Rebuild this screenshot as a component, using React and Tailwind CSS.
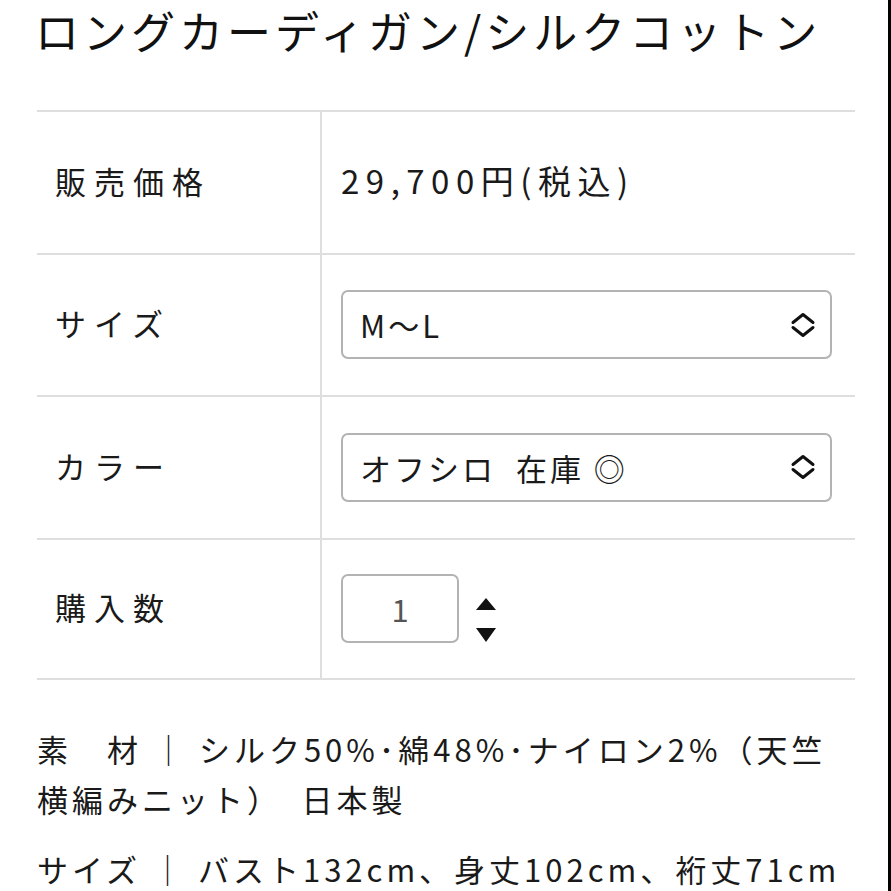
import React from 'react';

const font = { fontFamily: '"Noto Sans CJK JP", "Noto Sans", sans-serif' };

const Chevrons = () => (
  <svg width="26" height="26" viewBox="0 0 26 26" fill="none" stroke="#111" strokeWidth="3" strokeLinecap="round" strokeLinejoin="round">
    <path d="M3 10.5 L13 2.5 L23 10.5" />
    <path d="M3 15.5 L13 23.5 L23 15.5" />
  </svg>
);

const Spinner = () => (
  <svg width="22" height="46" viewBox="0 0 22 46" fill="#111">
    <path d="M1 13 L11 1 L21 13 Z" />
    <path d="M1 31 L21 31 L11 45 Z" />
  </svg>
);

const Select = ({ children }) => (
  <div className="w-[491px] h-[69px] rounded-[7px] border-2 border-[#b3b3b3] bg-white flex items-center justify-between pl-[17px] pr-[14px]">
    <span className="text-[31px] tracking-[3px] text-[#1a1a1a] leading-none whitespace-pre">{children}</span>
    <Chevrons />
  </div>
);

const Row = ({ label, children, last }) => (
  <div className={`flex h-[142.5px] border-t-2 border-[#dedede] ${last ? 'border-b-2' : ''}`}>
    <div className="w-[285px] border-r-2 border-[#dedede] flex items-center pl-[18px] pb-[4px]">
      <span className="text-[31px] tracking-[8px] text-[#1a1a1a] leading-none">{label}</span>
    </div>
    <div className="flex-1 flex items-center pl-[19px]">{children}</div>
  </div>
);

export default function App() {
  return (
    <div className="w-[891px] h-[891px] overflow-hidden bg-white border-r-[3px] border-black text-[#1a1a1a]" style={font}>
      <div className="h-[110px] pl-[35px]">
        <h1 className="text-[44px] leading-[60px] tracking-[4px] font-normal text-[#111] whitespace-nowrap">ロングカーディガン/シルクコットン</h1>
      </div>

      <div className="ml-[37px] w-[818px]">
        <Row label="販売価格">
          <span className="text-[33px] tracking-[6.5px] leading-none pb-[4px]">29,700円(税込)</span>
        </Row>
        <Row label="サイズ">
          <Select>M〜L</Select>
        </Row>
        <Row label="カラー">
          <Select>{'オフシロ  在庫 ◎'}</Select>
        </Row>
        <Row label="購入数" last>
          <div className="flex items-center gap-[16px]">
            <div className="w-[118px] h-[69px] rounded-[7px] border-2 border-[#b3b3b3] flex items-center justify-center text-[31px] text-[#555]">1</div>
            <div className="mt-[22px]">
              <Spinner />
            </div>
          </div>
        </Row>
      </div>

      <div className="pl-[37px] pt-[44px] text-[31px] tracking-[4px] leading-[50px] text-[#1a1a1a] whitespace-nowrap">
        <p>素　材 ｜ シルク50%･綿48%･ナイロン2%（天竺<br />横編みニット）　日本製</p>
        <p className="mt-[20px]">サイズ ｜ バスト132cm、身丈102cm、裄丈71cm</p>
      </div>
    </div>
  );
}
